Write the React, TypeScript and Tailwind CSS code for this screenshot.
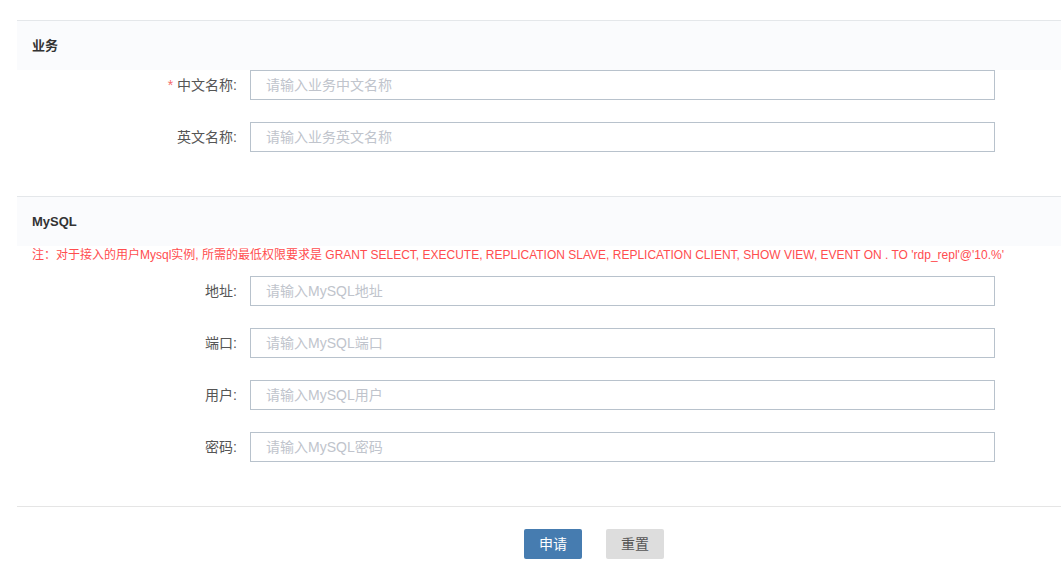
import React from "react";

const font = { fontFamily: '"Liberation Sans", "Noto Sans CJK SC", sans-serif' };

function Row({ label, placeholder, required }: { label: string; placeholder: string; required?: boolean }) {
  return (
    <div className="flex items-center h-[30px]">
      <div className="w-[233px] pr-[13px] text-right text-[14px] leading-[30px] text-[#555]">
        {required && <span className="text-[#f56c6c] mr-[4px]">*</span>}
        {label}:
      </div>
      <input
        className="w-[745px] h-[30px] border border-[#b8c2cc] px-[15px] text-[14px] text-[#333] placeholder:text-[#c0c4cc] outline-none"
        placeholder={placeholder}
        style={font}
      />
    </div>
  );
}

function Header({ title }: { title: string }) {
  return (
    <div className="h-[50px] border-t border-[#e4e7ea] bg-[#fafbfd] pl-[15px] flex items-center">
      <span className="text-[13px] font-bold text-[#333]">{title}</span>
    </div>
  );
}

export default function App() {
  return (
    <div className="w-[1061px] h-[574px] bg-white pl-[17px] pt-[20px] overflow-hidden" style={font}>
      <Header title="业务" />
      <div className="flex flex-col gap-[22px]">
        <Row label="中文名称" placeholder="请输入业务中文名称" required />
        <Row label="英文名称" placeholder="请输入业务英文名称" />
      </div>
      <div className="h-[44px]" />
      <Header title="MySQL" />
      <div className="pl-[15px] pt-[1px] text-[12px] leading-[16px] text-[#ff4d4f] h-[30px]">
        注：对于接入的用户Mysql实例, 所需的最低权限要求是 GRANT SELECT, EXECUTE, REPLICATION SLAVE, REPLICATION CLIENT, SHOW VIEW, EVENT ON . TO 'rdp_repl'@'10.%'
      </div>
      <div className="flex flex-col gap-[22px]">
        <Row label="地址" placeholder="请输入MySQL地址" />
        <Row label="端口" placeholder="请输入MySQL端口" />
        <Row label="用户" placeholder="请输入MySQL用户" />
        <Row label="密码" placeholder="请输入MySQL密码" />
      </div>
      <div className="h-[44px]" />
      <div className="border-t border-[#e5e5e5] pt-[22px] flex gap-[24px] pl-[507px]">
        <button className="w-[58px] h-[30px] rounded-[2px] bg-[#467cb0] text-white text-[14px]" style={font}>申请</button>
        <button className="w-[58px] h-[30px] rounded-[2px] bg-[#dddddd] text-[#555] text-[14px]" style={font}>重置</button>
      </div>
    </div>
  );
}
